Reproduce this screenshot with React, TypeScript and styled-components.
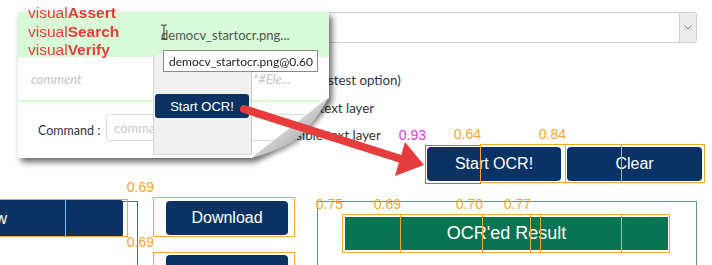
import React from "react";
import styled, { createGlobalStyle } from "styled-components";

const Global = createGlobalStyle`
  html, body { margin: 0; padding: 0; background: #fff; }
  body { font-family: "Liberation Sans", Arial, sans-serif; }
  * { box-sizing: border-box; }
`;

const NAVY = "#0a3363";
const ORANGE = "#f5a82e";
const MAGENTA = "#e23be2";

const Stage = styled.div`
  position: relative;
  width: 712px;
  height: 265px;
  overflow: hidden;
  background: #fff;
`;

const Page = styled.div`
  display: flex;
  flex-direction: column;
  padding-top: 12px;
`;

const Select = styled.div`
  margin-left: 200px;
  width: 497px;
  height: 31px;
  border: 1px solid #cfcfcf;
  border-radius: 3px;
  display: flex;
  justify-content: flex-end;
`;

const SelectArrow = styled.div`
  width: 17px;
  height: 100%;
  border-left: 1px solid #d2d2d2;
  background: #ececec;
  border-radius: 0 2px 2px 0;
  display: flex;
  align-items: center;
  justify-content: center;
`;

const Options = styled.div`
  margin-top: 23.5px;
  margin-left: 265px;
  display: flex;
  flex-direction: column;
`;

const Option = styled.label`
  height: 27.5px;
  display: flex;
  align-items: center;
  gap: 6px;
  font-family: Lato, "Open Sans", sans-serif;
  font-size: 13.3px;
  color: #333;
  white-space: nowrap;
`;

const Radio = styled.span`
  width: 13px;
  height: 13px;
  border: 1px solid #888;
  border-radius: 50%;
`;

const ActionRow = styled.div`
  display: flex;
  gap: 6px;
  margin-left: 427px;
  margin-top: -2px;
`;

const NavyButton = styled.button<{ $w: number; $h?: number }>`
  width: ${(p) => p.$w}px;
  height: ${(p) => p.$h ?? 34}px;
  flex: none;
  background: ${NAVY};
  color: #fff;
  border: none;
  border-radius: 4px;
  padding: 0;
  font-family: "Liberation Sans", Arial, sans-serif;
  font-size: 16px;
  display: flex;
  align-items: center;
  justify-content: center;
`;

const BottomRow = styled.div`
  display: flex;
  align-items: flex-start;
  margin-top: 19px;
`;

const LeftPanel = styled.div`
  margin-left: -166px;
  margin-top: 1px;
  width: 304px;
  height: 80px;
  flex: none;
  border-top: 1px solid #4f6f90;
  border-right: 1px solid #4f6f90;
  & > button {
    margin-top: -2px;
    border-radius: 0 3px 3px 0;
  }
`;

const DownloadColumn = styled.div`
  margin-left: 28px;
  margin-top: 1px;
  display: flex;
  flex-direction: column;
  gap: 20px;
`;

const ResultFieldset = styled.div`
  margin-left: 29px;
  margin-top: 1px;
  width: 380px;
  height: 80px;
  flex: none;
  border: 1px solid #5c978b;
  border-bottom: none;
  padding: 15px 0 0 27px;
`;

const GreenBar = styled.div`
  width: 323px;
  height: 33px;
  background: #077350;
  color: #fff;
  font-family: "Liberation Sans", Arial, sans-serif;
  font-size: 18px;
  display: flex;
  align-items: center;
  justify-content: center;
`;

/* OCR annotation boxes */
const BoxFrame = styled.div<{ $c: string }>`
  position: absolute;
  border: 1px solid ${(p) => p.$c};
  pointer-events: none;
`;

const BoxLabel = styled.span<{ $c: string }>`
  position: absolute;
  right: 100%;
  bottom: calc(100% + 4px);
  font-family: "Liberation Sans", Arial, sans-serif;
  font-size: 14px;
  line-height: 14px;
  color: ${(p) => p.$c};
  white-space: nowrap;
`;

type Box = { x: number; y: number; w: number; h: number; label?: string; c: string };

const boxes: Box[] = [
  { x: 425, y: 145, w: 56, h: 39, label: "0.93", c: MAGENTA },
  { x: 480, y: 144, w: 86, h: 39, label: "0.64", c: ORANGE },
  { x: 565, y: 144, w: 140, h: 39, label: "0.84", c: ORANGE },
  { x: 621, y: 144, w: 84, h: 39, c: ORANGE },
  { x: -40, y: 199, w: 168, h: 38, c: ORANGE },
  { x: 65, y: 199, w: 63, h: 38, c: ORANGE },
  { x: 153, y: 197, w: 142, h: 40, label: "0.69", c: ORANGE },
  { x: 153, y: 252, w: 142, h: 40, label: "0.69", c: ORANGE },
  { x: 342, y: 214, w: 328, h: 39, label: "0.75", c: ORANGE },
  { x: 400, y: 214, w: 141, h: 39, label: "0.69", c: ORANGE },
  { x: 482, y: 214, w: 140, h: 39, label: "0.70", c: ORANGE },
  { x: 530, y: 214, w: 140, h: 39, label: "0.77", c: ORANGE },
];

/* Popup screenshot */
const PopupShadow = styled.div`
  position: absolute;
  left: 18px;
  top: 12px;
  width: 311px;
  height: 146px;
  filter: drop-shadow(3px 4px 3px rgba(0, 0, 0, 0.6));
`;

const PopupBody = styled.div`
  position: relative;
  width: 100%;
  height: 100%;
  background: #fff;
  clip-path: polygon(0 0, 311px 0, 311px 86px, 234px 146px, 0 146px);
  display: flex;
  flex-direction: column;
  font-family: Lato, "Open Sans", sans-serif;
  font-size: 13px;
`;

const GreenRow = styled.div`
  height: 45px;
  background: #d7fad7;
  display: flex;
  align-items: center;
  padding-left: 143px;
  color: #555;
`;

const CommentRow = styled.div`
  height: 43px;
  display: grid;
  grid-template-columns: 222px 1fr;
  align-items: center;
  padding-left: 13px;
  font-style: italic;
  color: #c4c4c4;
`;

const GreenLine = styled.div`
  height: 2px;
  width: 302px;
  background: #d7fad7;
`;

const CommandRow = styled.div`
  margin-top: 12px;
  padding-left: 20px;
  display: flex;
  align-items: center;
`;

const CommandLabel = styled.span`
  width: 68px;
  color: #333;
  font-size: 12.5px;
  padding-top: 5px;
`;

const CommandInput = styled.div`
  width: 200px;
  height: 27px;
  border: 1px solid #dedede;
  border-radius: 3px;
  padding-left: 7px;
  display: flex;
  align-items: center;
  color: #c8c8c8;
`;

const Dropdown = styled.div`
  position: absolute;
  left: 135px;
  top: 43px;
  width: 99px;
  height: 100px;
  background: #f0f0f0;
  border-left: 1px solid #d4d4d4;
  border-right: 1px solid #cacaca;
  border-bottom: 1px solid #dcdcdc;
  display: flex;
  flex-direction: column;
`;

const DropInput = styled.div`
  margin-top: -5px;
  margin-left: 9px;
  width: 155px;
  height: 22px;
  flex: none;
  background: #fff;
  border: 1px solid #8a8a8a;
  color: #222;
  font-size: 12px;
  display: flex;
  align-items: center;
  padding-left: 5px;
  white-space: nowrap;
  overflow: hidden;
`;

const DropButton = styled.div`
  margin-top: 22px;
  margin-left: 1px;
  width: 94px;
  height: 24px;
  background: ${NAVY};
  color: #fff;
  border-radius: 3px;
  font-family: "Liberation Sans", Arial, sans-serif;
  font-size: 13px;
  display: flex;
  align-items: center;
  justify-content: center;
`;

const RedNote = styled.div`
  position: absolute;
  left: 28px;
  top: 4px;
  font-family: "Liberation Sans", Arial, sans-serif;
  font-size: 15.5px;
  line-height: 18.5px;
  color: #e63c3c;
  & b { font-weight: 700; }
`;

const Overlay = styled.svg`
  position: absolute;
  left: 0;
  top: 0;
  pointer-events: none;
`;

export default function App() {
  return (
    <Stage>
      <Global />
      <Page>
        <Select>
          <SelectArrow>
            <svg width="8" height="5" viewBox="0 0 8 5">
              <path d="M0.5 0.5 L4 4 L7.5 0.5" fill="none" stroke="#7a7a7a" strokeWidth="1" />
            </svg>
          </SelectArrow>
        </Select>
        <Options>
          <Option><Radio />Best (fastest option)</Option>
          <Option><Radio />Show text layer</Option>
          <Option><Radio />Visible text layer</Option>
        </Options>
        <ActionRow>
          <NavyButton $w={134}>Start OCR!</NavyButton>
          <NavyButton $w={135}>Clear</NavyButton>
        </ActionRow>
        <BottomRow>
          <LeftPanel>
            <NavyButton $w={289} $h={37}>Preview</NavyButton>
          </LeftPanel>
          <DownloadColumn>
            <NavyButton $w={122}>Download</NavyButton>
            <NavyButton $w={122}>Upload</NavyButton>
          </DownloadColumn>
          <ResultFieldset>
            <GreenBar>OCR'ed Result</GreenBar>
          </ResultFieldset>
        </BottomRow>
      </Page>

      {boxes.map((b, i) => (
        <BoxFrame
          key={i}
          $c={b.c}
          style={{ left: b.x, top: b.y, width: b.w, height: b.h }}
        >
          {b.label && <BoxLabel $c={b.c}>{b.label}</BoxLabel>}
        </BoxFrame>
      ))}

      <PopupShadow>
        <PopupBody>
          <GreenRow>democv_startocr.png...</GreenRow>
          <CommentRow>
            <span>comment</span>
            <span>*#Ele...</span>
          </CommentRow>
          <GreenLine />
          <CommandRow>
            <CommandLabel>Command :</CommandLabel>
            <CommandInput>command</CommandInput>
          </CommandRow>
          <Dropdown>
            <DropInput>democv_startocr.png@0.60</DropInput>
            <DropButton>Start OCR!</DropButton>
          </Dropdown>
        </PopupBody>
      </PopupShadow>

      <Overlay width="712" height="265" viewBox="0 0 712 265">
        <defs>
          <linearGradient id="curl" x1="0" y1="0" x2="1" y2="1">
            <stop offset="0" stopColor="#fafafa" />
            <stop offset="0.5" stopColor="#cfcfcf" />
            <stop offset="1" stopColor="#858585" />
          </linearGradient>
          <filter id="curlShadow" x="-20%" y="-20%" width="140%" height="140%">
            <feDropShadow dx="2" dy="3" stdDeviation="2.5" floodColor="#000" floodOpacity="0.4" />
          </filter>
        </defs>
        <path
          d="M329 97 Q 316 121 296 139 Q 276 151 252 158 Z"
          fill="url(#curl)"
          filter="url(#curlShadow)"
        />
        {/* I-beam cursor */}
        <path
          d="M161 25 h2 q1 0 1 1 q0 -1 1 -1 h2 M164 26 v12 M161 39 h2 q1 0 1 -1 q0 1 1 1 h2"
          fill="none"
          stroke="#333"
          strokeWidth="1"
        />
        {/* red arrow */}
        <line x1="244" y1="109" x2="401" y2="159" stroke="#e63c3c" strokeWidth="8" strokeLinecap="round" />
        <polygon points="424,165 405,142 395,176" fill="#e63c3c" />
      </Overlay>

      <RedNote>
        visual<b>Assert</b>
        <br />
        visual<b>Search</b>
        <br />
        visual<b>Verify</b>
      </RedNote>
    </Stage>
  );
}
